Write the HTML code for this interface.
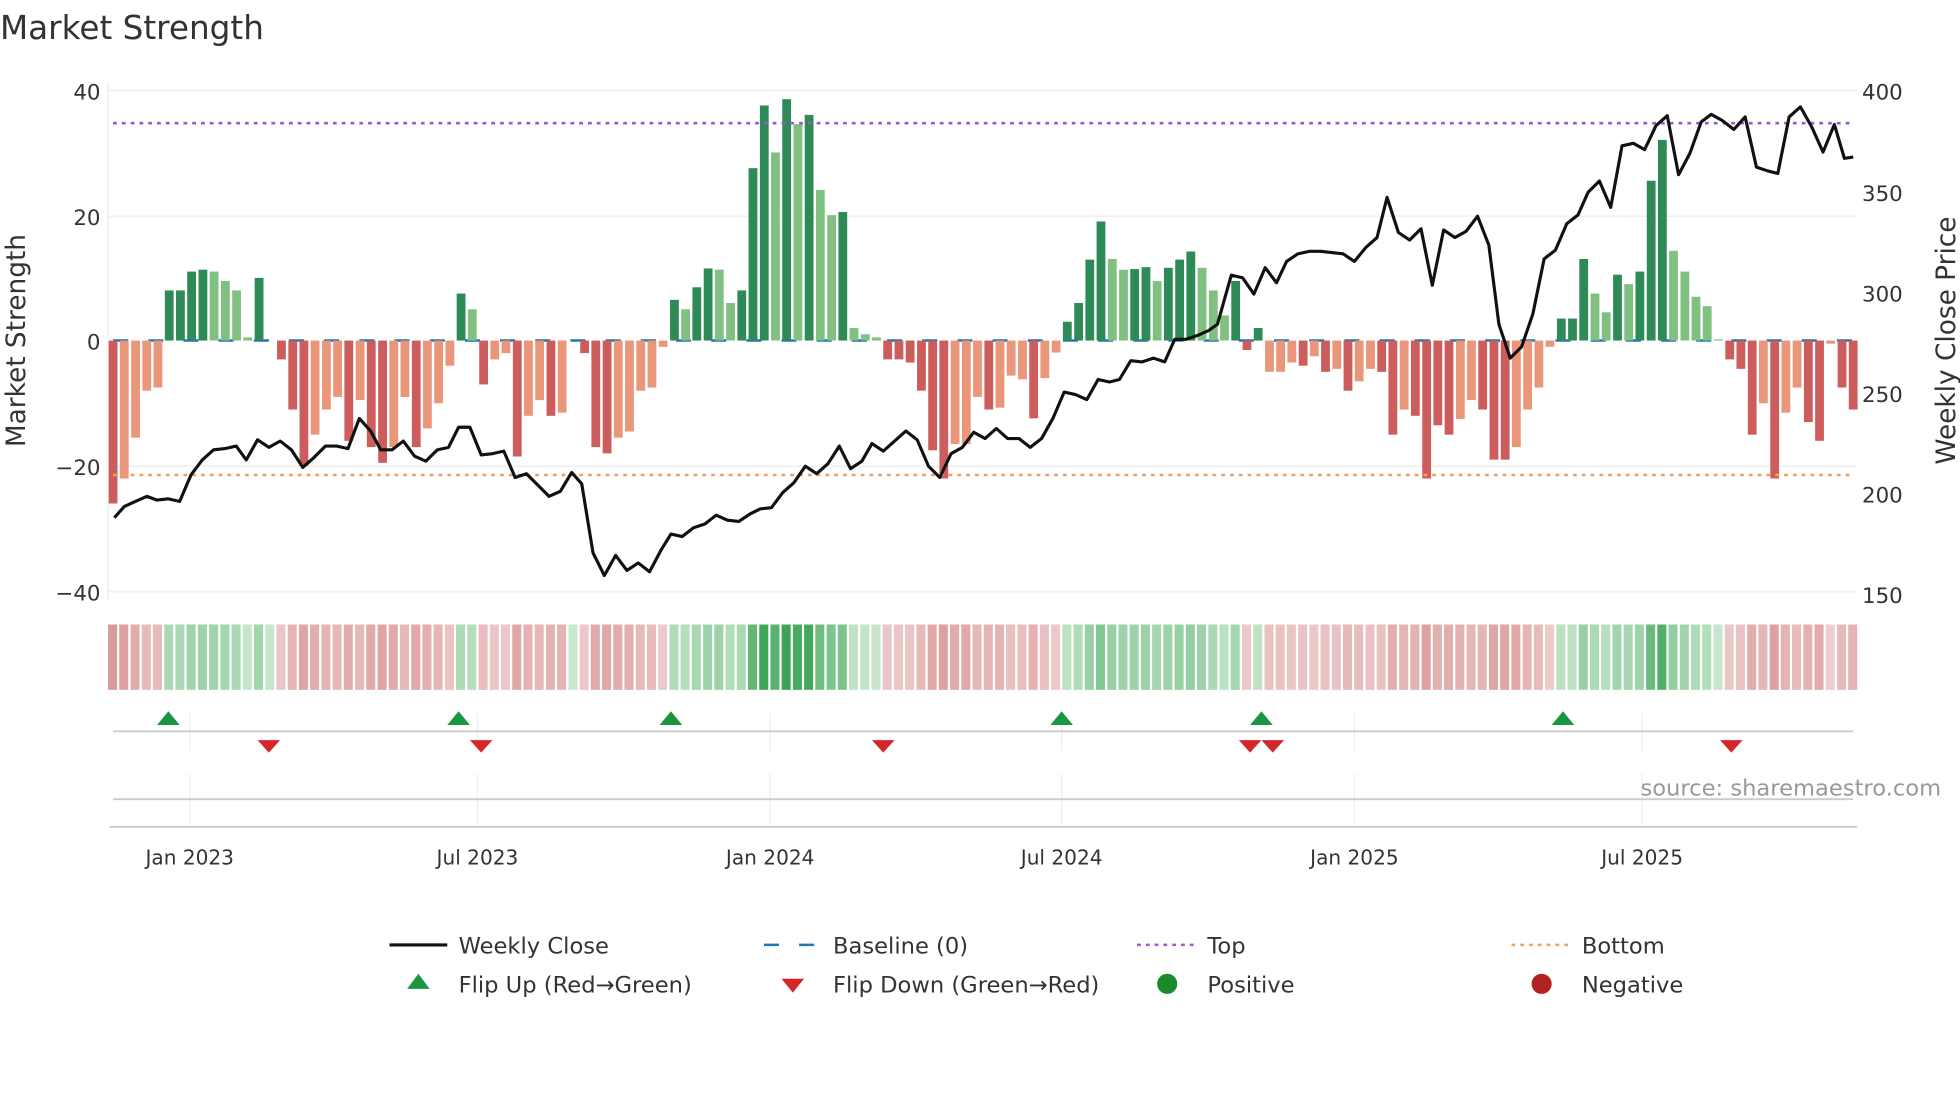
<!DOCTYPE html>
<html><head><meta charset="utf-8"><style>
html,body{margin:0;padding:0;background:#fff;}
svg{display:block;font-family:"DejaVu Sans","Liberation Sans",sans-serif;}
</style></head><body>
<svg id="s" width="1960" height="1102" viewBox="0 0 1560 877" xmlns="http://www.w3.org/2000/svg">
<rect width="1560" height="877" fill="#fff"/>
<text x="0" y="31" font-size="26" fill="#333">Market Strength</text>
<g stroke="#ececec" stroke-width="1">
<line x1="86" x2="1478" y1="72" y2="72"/><line x1="86" x2="1478" y1="172" y2="172"/>
<line x1="86" x2="1478" y1="371" y2="371"/><line x1="86" x2="1478" y1="471" y2="471"/>
<line x1="86" x2="86" y1="65" y2="478"/>
</g>
<g font-size="17" fill="#333" text-anchor="end">
<text x="80" y="79">40</text><text x="80" y="179">20</text><text x="80" y="278">0</text>
<text x="80" y="378">−20</text><text x="80" y="478">−40</text>
</g>
<g font-size="17" fill="#333">
<text x="1482" y="79">400</text><text x="1482" y="160">350</text><text x="1482" y="240">300</text>
<text x="1482" y="320">250</text><text x="1482" y="400">200</text><text x="1482" y="480">150</text>
</g>
<text transform="translate(20,271) rotate(-90)" text-anchor="middle" font-size="21" fill="#333">Market Strength</text>
<text transform="translate(1556,271) rotate(-90)" text-anchor="middle" font-size="21" fill="#333">Weekly Close Price</text>
<line x1="90" x2="1475" y1="271" y2="271" stroke="#1f77b4" stroke-width="2" stroke-dasharray="12,16"/>
<g id="bars"></g>
<line x1="90" x2="1475" y1="98" y2="98" stroke="#9b59d0" stroke-width="2" stroke-dasharray="3,4"/>
<line x1="90" x2="1475" y1="378" y2="378" stroke="#f0a060" stroke-width="2" stroke-dasharray="3,4"/>
<polyline id="pl" fill="none" stroke="#111" stroke-width="2.5" stroke-linejoin="round"/>
<g id="heat"></g>
<g stroke="#eee" stroke-width="1">
<line x1="151" x2="151" y1="568" y2="598"/><line x1="380" x2="380" y1="568" y2="598"/><line x1="613" x2="613" y1="568" y2="598"/>
<line x1="845" x2="845" y1="568" y2="598"/><line x1="1078" x2="1078" y1="568" y2="598"/><line x1="1307" x2="1307" y1="568" y2="598"/>
<line x1="151" x2="151" y1="616" y2="658"/><line x1="380" x2="380" y1="616" y2="658"/><line x1="613" x2="613" y1="616" y2="658"/>
<line x1="845" x2="845" y1="616" y2="658"/><line x1="1078" x2="1078" y1="616" y2="658"/><line x1="1307" x2="1307" y1="616" y2="658"/>
</g>
<line x1="90" x2="1475" y1="582" y2="582" stroke="#ccc" stroke-width="1.5"/>
<line x1="90" x2="1475" y1="636" y2="636" stroke="#ccc" stroke-width="1.5"/>
<line x1="87" x2="1478" y1="658" y2="658" stroke="#ccc" stroke-width="1.5"/>
<g id="mk"></g>
<text x="1545" y="633" text-anchor="end" font-size="18" fill="#999">source: sharemaestro.com</text>
<g font-size="16" fill="#333" text-anchor="middle">
<text x="151" y="688">Jan 2023</text><text x="380" y="688">Jul 2023</text><text x="613" y="688">Jan 2024</text>
<text x="845" y="688">Jul 2024</text><text x="1078" y="688">Jan 2025</text><text x="1307" y="688">Jul 2025</text>
</g>
<g font-size="18" fill="#333">
<line x1="310" x2="356" y1="752" y2="752" stroke="#111" stroke-width="2.5"/><text x="365" y="759">Weekly Close</text>
<line x1="608" x2="650" y1="752" y2="752" stroke="#1f77b4" stroke-width="2" stroke-dasharray="12,16"/><text x="663" y="759">Baseline (0)</text>
<line x1="905" x2="950" y1="752" y2="752" stroke="#9b59d0" stroke-width="2" stroke-dasharray="3,4"/><text x="961" y="759">Top</text>
<line x1="1203" x2="1248" y1="752" y2="752" stroke="#f0a060" stroke-width="2" stroke-dasharray="3,4"/><text x="1259" y="759">Bottom</text>
<polygon points="333,775 342,787 324,787" fill="#1a9641"/><text x="365" y="790">Flip Up (Red→Green)</text>
<polygon points="622,779 640,779 631,790" fill="#d62728"/><text x="663" y="790">Flip Down (Green→Red)</text>
<circle cx="929" cy="783" r="8" fill="#1a8a2a"/><text x="961" y="790">Positive</text>
<circle cx="1227" cy="783" r="8" fill="#b22222"/><text x="1259" y="790">Negative</text>
</g>
</svg>
<script>
var D="D",L="L",R="R",P="P";
var v=[-26,R,-22,P,-15.5,P,-8,P,-7.5,P,8,D,8,D,11,D,11.3,D,11,L,9.5,L,8,L,0.5,L,10,D,0,L,-3,R,-11,R,-20,R,-15,P,-11,P,-9,P,-16,R,-9.5,P,-17,R,-19.5,R,-17,P,-9,P,-17,R,-14,P,-10,P,-4,P,7.5,D,5,L,-7,R,-3,P,-2,P,-18.5,R,-12,P,-9.5,P,-12,R,-11.5,P,0,L,-2,R,-17,R,-18,R,-15.5,P,-14.5,P,-8,P,-7.5,P,-1,P,6.5,D,5,L,8.5,D,11.5,D,11.3,L,6,L,8,D,27.5,D,37.5,D,30,L,38.5,D,34.5,L,36,D,24,L,20,L,20.5,D,2,L,1,L,0.5,L,-3,R,-3,R,-3.5,R,-8,R,-17.5,R,-22,R,-16.5,P,-16.5,P,-9,P,-11,R,-10.7,P,-5.6,P,-6.2,P,-12.4,R,-6,P,-1.9,P,3,D,6,D,12.9,D,19,D,13,L,11.3,L,11.4,D,11.7,D,9.5,L,11.6,D,12.9,D,14.2,D,11.6,L,8,L,4,L,9.5,D,-1.5,R,2,D,-5,P,-5,P,-3.5,P,-4,R,-2.5,P,-5,R,-4.5,P,-8,R,-6.5,P,-4.5,P,-5,R,-15,R,-11,P,-12,R,-22,R,-13.5,R,-15,R,-12.5,P,-9.5,P,-11,R,-19,R,-19,R,-17,P,-11,P,-7.5,P,-1,P,3.5,D,3.5,D,13,D,7.5,L,4.5,L,10.5,D,9,L,11,D,25.5,D,32,D,14.3,L,11,L,7,L,5.5,L,0.2,L,-3,R,-4.5,R,-15,R,-10,P,-22,R,-11.5,P,-7.5,P,-13,R,-16,R,-0.5,P,-7.5,R,-11,R];
var col={D:"#2e8b57",L:"#80c080",R:"#cd5c5c",P:"#e9967a"};
var n=v.length/2,x0=90,x1=1475,st=(x1-x0)/(n-1),b="",h="";
function mix(a,c,t){return "rgb("+[0,1,2].map(function(i){return Math.round(a[i]+(c[i]-a[i])*t)}).join(",")+")";}
for(var i=0;i<n;i++){var val=v[2*i],t=v[2*i+1],x=x0+st*i,y0=271,y=271-val*4.99;
 if(Math.abs(val)>0.05)b+='<rect x="'+(x-3.5).toFixed(1)+'" y="'+Math.min(y,y0).toFixed(1)+'" width="7" height="'+Math.abs(y-y0).toFixed(1)+'" fill="'+col[t]+'"/>';
 var m=Math.min(1,Math.abs(val)/38),c;
 if(val>=0)c=mix([215,238,218],[60,165,85],Math.pow(m,1.0)*0.9+0.1);else c=mix([242,215,215],[212,135,135],Math.pow(m,0.8)*0.9+0.1);
 h+='<rect x="'+(x-4).toFixed(1)+'" y="497" width="7.2" height="52" fill="'+c+'"/>';}
document.getElementById("bars").innerHTML=b;document.getElementById("heat").innerHTML=h;
var p=[91,412,99,403,108,399,117,395,125,398,134,397,143,399,152,378,161,366,170,358,179,357,188,355,196,366,205,350,214,356,223,351,232,358,241,372,250,364,259,355,268,355,277,357,286,333,295,343,303,358,312,358,321,351,330,363,339,367,348,358,357,356,365,340,374,340,383,362,392,361,401,359,410,380,419,377,428,386,437,395,446,391,455,376,463,385,472,440,481,458,490,442,499,454,508,448,517,455,526,438,534,425,543,427,552,420,561,417,570,410,579,414,588,415,597,409,605,405,614,404,623,392,632,384,641,371,650,377,659,369,668,355,677,373,686,367,694,353,703,359,712,351,721,343,730,350,739,371,748,380,757,361,766,356,775,344,784,349,793,341,802,349,811,349,820,356,829,349,838,333,847,312,856,314,865,318,874,302,883,304,891,302,900,287,909,288,918,285,927,288,935,270,944,270,953,267,962,263,969,258,980,219,989,221,998,234,1007,213,1016,225,1024,208,1033,202,1042,200,1051,200,1060,201,1069,202,1078,208,1087,197,1096,189,1104,157,1113,185,1122,191,1131,182,1140,227,1149,183,1158,189,1167,184,1176,172,1185,195,1193,258,1202,285,1211,276,1220,250,1229,206,1238,199,1247,178,1256,171,1264,153,1273,144,1282,165,1291,116,1300,114,1309,119,1318,100,1327,92,1336,139,1345,122,1354,97,1362,91,1371,96,1380,103,1389,93,1398,133,1407,136,1415,138,1424,93,1433,85,1442,101,1451,121,1460,99,1468,126,1475,125];
var s="";for(var j=0;j<p.length;j+=2)s+=p[j]+","+p[j+1]+" ";document.getElementById("pl").setAttribute("points",s);
var up=[134,365,534,845,1004,1244],dn=[214,383,703,995,1013,1378],m="";
up.forEach(function(x){m+='<polygon points="'+x+',566 '+(x+9)+',577 '+(x-9)+',577" fill="#1a9641"/>';});
dn.forEach(function(x){m+='<polygon points="'+(x-9)+',589 '+(x+9)+',589 '+x+',599" fill="#d62728"/>';});
document.getElementById("mk").innerHTML=m;
</script>
</body></html>
